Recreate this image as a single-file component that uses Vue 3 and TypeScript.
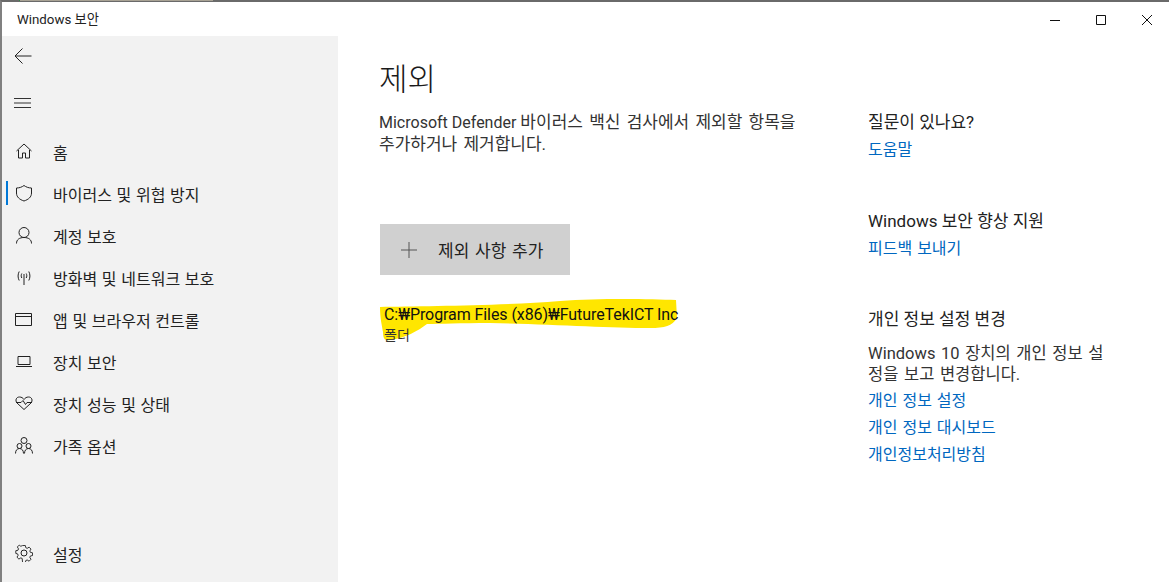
<script setup lang="ts">
const navItems: { label: string; icon: string; active?: boolean }[] = [
  { label: '홈', icon: 'home' },
  { label: '바이러스 및 위협 방지', icon: 'shield', active: true },
  { label: '계정 보호', icon: 'person' },
  { label: '방화벽 및 네트워크 보호', icon: 'antenna' },
  { label: '앱 및 브라우저 컨트롤', icon: 'window' },
  { label: '장치 보안', icon: 'laptop' },
  { label: '장치 성능 및 상태', icon: 'heart' },
  { label: '가족 옵션', icon: 'family' },
]
const privacyLinks = ['개인 정보 설정', '개인 정보 대시보드', '개인정보처리방침']
</script>

<template>
  <div class="window">
    <span class="behind"></span>
    <header class="titlebar">
      <span class="title">Windows 보안</span>
      <div class="controls">
        <svg width="12" height="12" viewBox="0 0 12 12"><path d="M1 6.500h10" stroke="#111" fill="none" /></svg>
        <svg width="12" height="12" viewBox="0 0 12 12"><path d="M1.500 1.500h9v9h-9z" stroke="#111" fill="none" /></svg>
        <svg width="12" height="12" viewBox="0 0 12 12"><path d="M1 1l10 10M11 1L1 11" stroke="#111" fill="none" /></svg>
      </div>
    </header>
    <div class="body">
      <aside class="sidebar">
        <div class="top-icons">
          <svg class="glyph" width="18" height="18" viewBox="0 0 18 18"><path d="M17.500 9H1M8.500 1.500L1 9l7.500 7.500" stroke="#222" fill="none" /></svg>
          <svg class="glyph menu" width="18" height="12" viewBox="0 0 18 12"><path d="M0 1.500h17M0 6h17M0 10.500h17" stroke="#333" fill="none" /></svg>
        </div>
        <nav class="nav">
          <div v-for="item in navItems" :key="item.label" class="nav-item">
            <span v-if="item.active" class="marker"></span>
            <svg class="nav-icon" width="18" height="18" viewBox="0 0 18 18" fill="none" stroke="#222" stroke-width="1">
              <path v-if="item.icon === 'home'" d="M1.500 9L9 2l7.500 7M3.500 8v8h4v-5h3v5h4V8" />
              <path v-else-if="item.icon === 'shield'" d="M9 1.500C11 3 13.500 4 16.500 4v5c0 4-3 6.500-7.500 8C4.500 15.500 1.500 13 1.500 9V4C4.500 4 7 3 9 1.500z" />
              <template v-else-if="item.icon === 'person'">
                <circle cx="9" cy="6.500" r="5" />
                <path d="M1.500 17.500c0-4 3-6 7.500-6s7.500 2 7.500 6" />
              </template>
              <path v-else-if="item.icon === 'antenna'" d="M9 6v11M6.800 5.500c-.8 1.500-.8 3 0 4.500M11.200 5.500c.8 1.500.8 3 0 4.500M4.200 3.500c-1.500 3-1.500 6 0 9M13.800 3.500c1.500 3 1.500 6 0 9" />
              <path v-else-if="item.icon === 'window'" d="M.5 3.500h16v12H.5zM.5 6.500h16" />
              <path v-else-if="item.icon === 'laptop'" d="M3 4.500h12v8H3zM1 14.500h16" />
              <path v-else-if="item.icon === 'heart'" d="M9 15.500L2 9C0 6.500 1 3 4.500 3 6.500 3 8 4 9 5.500 10 4 11.500 3 13.500 3 17 3 18 6.500 16 9zM1 8.500h5L8 6.500l2.500 4 1.500-2h5" />
              <template v-else-if="item.icon === 'family'">
                <circle cx="9" cy="4.500" r="3" />
                <circle cx="4.500" cy="10" r="2.500" />
                <circle cx="13.500" cy="10" r="2.500" />
                <path d="M.5 17.500c0-3 1.500-5 4-5s4 2 4 5M9.500 17.500c0-3 1.500-5 4-5s4 2 4 5" />
              </template>
            </svg>
            <span class="nav-label">{{ item.label }}</span>
          </div>
        </nav>
        <div class="nav-item settings">
          <svg class="nav-icon" width="18" height="18" viewBox="0 0 18 18" fill="none" stroke="#222" stroke-width="1">
            <circle cx="9" cy="9" r="3" />
            <path d="M7.500 .8h3l.5 2.400 1.500.7 2.100-1.300 2.100 2.100-1.300 2.100.6 1.500 2.400.5v3l-2.400.5-.6 1.500 1.300 2.100-2.100 2.100-2.100-1.300-1.500.6-.5 2.400h-3L7 15l-1.500-.6-2.100 1.300-2.100-2.100 1.300-2.100L2 10l-2-.5v-3l2.400-.5.6-1.500-1.300-2.100L3.800 .3l1.700 1.300L7 1z" transform="translate(.8 .8) scale(.91)" />
          </svg>
          <span class="nav-label">설정</span>
        </div>
      </aside>
      <main class="main">
        <section class="content">
          <h1>제외</h1>
          <p class="desc">Microsoft Defender <span class="ko">바이러스 백신 검사에서 제외할 항목을</span><br /><span class="ko">추가하거나 제거합니다.</span></p>
          <button class="add" type="button">
            <svg width="16" height="16" viewBox="0 0 16 16"><path d="M8 0v16M0 8h16" stroke="#555" fill="none" /></svg>
            <span>제외 사항 추가</span>
          </button>
          <div class="entry">
            <svg class="highlight" width="298" height="44" viewBox="0 0 298 44"><path d="M0 9C40 8 120 8 180 3 220 0 270 1 296 2L297 20C292 28 285 30 270 30 230 30 170 26 110 25 80 25 60 26 47 26 38 33 25 40 10 42 5 43 3 41 3 34 2 28 0 20 0 9z" fill="#ffe600" /></svg>
            <div class="path">C:₩Program Files (x86)₩FutureTekICT Inc</div>
            <div class="kind">폴더</div>
          </div>
        </section>
        <aside class="help">
          <div class="block question">
            <h2>질문이 있나요?</h2>
            <a>도움말</a>
          </div>
          <div class="block improve">
            <h2>Windows 보안 향상 지원</h2>
            <a>피드백 보내기</a>
          </div>
          <div class="block privacy">
            <h2>개인 정보 설정 변경</h2>
            <p>Windows 10 장치의 개인 정보 설<br />정을 보고 변경합니다.</p>
            <a v-for="l in privacyLinks" :key="l" class="plink">{{ l }}</a>
          </div>
        </aside>
      </main>
    </div>
  </div>
</template>

<style>
html, body { margin: 0; background: #fff; }
</style>

<style scoped>
.window {
  position: relative;
  width: 1169px;
  height: 582px;
  box-sizing: border-box;
  border-top: 2px solid #6a6a6a;
  border-left: 2px solid #808080;
  display: flex;
  flex-direction: column;
  overflow: hidden;
  background: #fff;
  font-family: Roboto, "Noto Sans CJK KR", sans-serif;
  color: #1a1a1a;
}
.behind {
  position: fixed;
  left: 19px;
  top: 0;
  width: 193px;
  height: 1px;
  background: #a8a294;
  border-left: 1px solid #2f8f3f;
}
.titlebar {
  height: 34px;
  flex: none;
  display: flex;
  align-items: center;
  justify-content: space-between;
}
.title { font-size: 13.300px; margin-left: 15px; margin-bottom: 2px; color: #222; }
.controls { display: flex; gap: 34px; margin-right: 16px; margin-top: 1px; }
.body { flex: 1; display: flex; min-height: 0; }
.sidebar {
  width: 336px;
  flex: none;
  background: #f2f2f2;
  display: flex;
  flex-direction: column;
  position: relative;
}
.top-icons { height: 94px; flex: none; display: flex; flex-direction: column; align-items: flex-start; }
.glyph { margin-left: 12px; margin-top: 11px; }
.menu { margin-top: 32px; }
.nav { display: flex; flex-direction: column; }
.nav-item {
  height: 42px;
  display: flex;
  align-items: center;
  position: relative;
  padding-left: 13px;
  flex: none;
}
.nav-icon { flex: none; }
.nav-label { margin-left: 20px; margin-top: 2px; font-size: 16px; word-spacing: .7px; color: #222; }
.marker {
  position: absolute;
  left: 4px;
  top: 9px;
  width: 2px;
  height: 24px;
  background: #0078d7;
}
.settings { margin-top: auto; margin-bottom: 8px; }
.main { flex: 1; display: flex; min-width: 0; }
.content { width: 530px; flex: none; padding-left: 41px; box-sizing: border-box; }
h1 { margin: 21px 0 0; font-size: 31px; line-height: 46px; font-weight: 300; color: #1a1a1a; }
.desc { margin: 9px 0 0; font-size: 16px; line-height: 22px; color: #333; }
.ko { font-size: 17px; line-height: 1; word-spacing: 2px; }
.add {
  margin: 68px 0 0 1px;
  width: 190px;
  height: 51px;
  background: #d0d0d0;
  border: 0;
  padding: 0 0 0 21px;
  display: flex;
  align-items: center;
  font: inherit;
  color: #222;
}
.add span { margin-left: 21px; font-size: 17px; word-spacing: 1.500px; }
.entry { position: relative; margin-top: 29px; height: 50px; }
.highlight { position: absolute; left: 1px; top: -6px; }
.path, .kind { position: relative; margin-left: 5px; white-space: nowrap; }
.path { font-size: 16px; line-height: 22px; letter-spacing: -.08px; color: #111; }
.kind { font-size: 14px; line-height: 18px; color: #333; }
.help { flex: 1; }
.block { display: flex; flex-direction: column; align-items: flex-start; }
h2 { margin: 0; font-size: 17px; line-height: 22px; font-weight: 400; color: #222; }
a { color: #0067c0; font-size: 16px; line-height: 22px; word-spacing: 1px; }
.question { margin-top: 75px; }
.question h2 { margin-bottom: 6px; }
.improve { margin-top: 49px; }
.improve h2 { margin-bottom: 6px; }
.privacy { margin-top: 48px; }
.privacy p { margin: 13px 0 0; font-size: 16.500px; line-height: 21px; word-spacing: 1.500px; color: #333; }
.plink { margin-top: 5px; }
</style>
